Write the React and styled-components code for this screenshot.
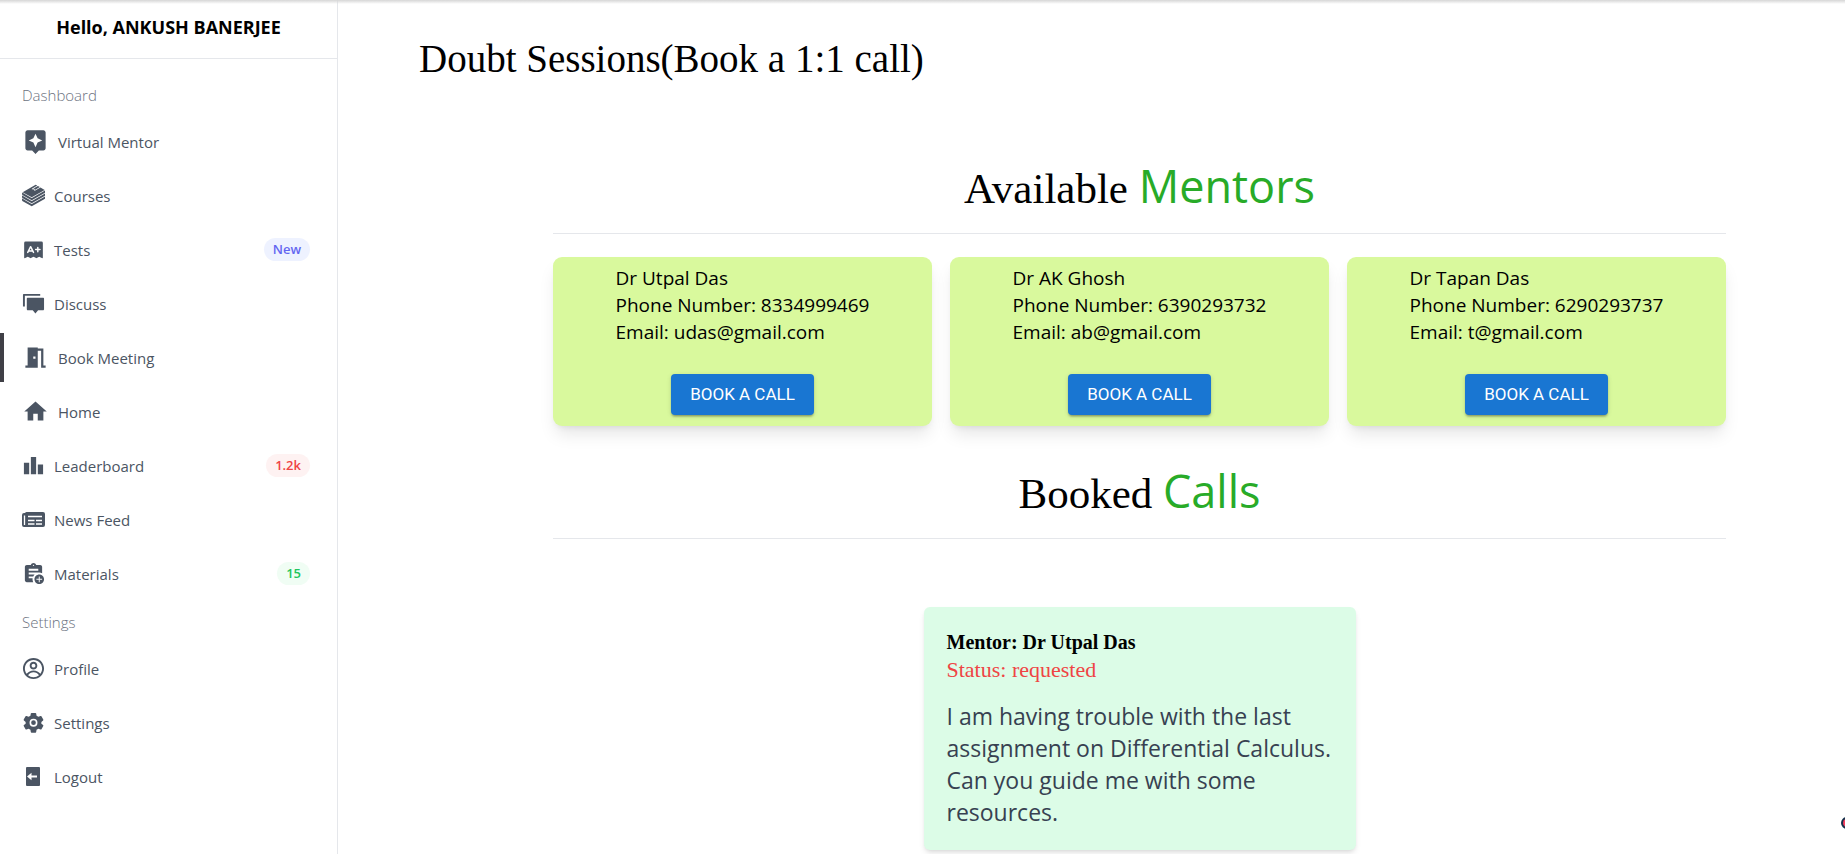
import React from "react";
import styled, { createGlobalStyle } from "styled-components";
import {
  MdAssistant,
  MdMeetingRoom,
  MdHome,
  MdLeaderboard,
  MdAssignmentAdd,
} from "react-icons/md";
import { RiDiscussFill } from "react-icons/ri";
import { CgProfile } from "react-icons/cg";
import { SiBookstack } from "react-icons/si";
import { PiExamFill } from "react-icons/pi";

const sans = '"Open Sans", "Noto Sans", sans-serif';
const serif = '"Liberation Serif", "Times New Roman", serif';
const round = '"Open Sans", "Noto Sans", sans-serif';

const GlobalStyle = createGlobalStyle`
  *, *::before, *::after { box-sizing: border-box; }
  body { margin: 0; background: #fff; color: #000; font-family: ${sans}; }
  h1, h2, h3, p, ul { margin: 0; padding: 0; font-weight: 400; }
  ul { list-style: none; }
`;

const Page = styled.div`
  display: flex;
  min-height: 100vh;
  overflow: hidden;
`;

const TopShadow = styled.div`
  position: absolute;
  inset: 0 0 auto 0;
  height: 4px;
  background: linear-gradient(#d6d6d6, rgba(255, 255, 255, 0));
  z-index: 2;
`;

const Sidebar = styled.aside`
  flex: 0 0 338px;
  border-right: 1px solid #e5e7eb;
`;

const Greeting = styled.div`
  height: 59px;
  padding-top: 14px;
  border-bottom: 1px solid #e5e7eb;
  text-align: center;
  font-size: 18px;
  line-height: 27px;
  font-weight: 700;
`;

const NavList = styled.ul`
  display: flex;
  flex-direction: column;
  gap: 5px;
  padding-top: 17px;
`;

const NavLabel = styled.li`
  height: 36px;
  padding-left: 22px;
  font-size: 15px;
  line-height: 38px;
  font-weight: 300;
  color: #6b7280;
`;

const NavLink = styled.a`
  display: flex;
  align-items: center;
  gap: 9px;
  height: 49px;
  padding: 0 27px 0 18px;
  border-left: 4px solid ${(p) => (p.$active ? "#3f3f46" : "transparent")};
  font-size: 15px;
  color: #4b5563;
  text-decoration: none;
`;

const Badge = styled.span`
  margin-left: auto;
  padding: 0 9px;
  border-radius: 12px;
  font-size: 13px;
  line-height: 23px;
  font-weight: 600;
  color: ${(p) => p.$color};
  background: ${(p) => p.$bg};
`;

const Main = styled.main`
  flex: 1;
  min-width: 0;
  padding-top: 37px;
`;

const PageTitle = styled.h1`
  padding-left: 81px;
  font: 400 39px/44px ${serif};
`;

const Section = styled.section`
  margin: 0 119px 0 215px;
`;

const SectionTitle = styled.h2`
  padding: ${(p) => p.$top}px 0 20px;
  border-bottom: 1px solid #e5e7eb;
  text-align: center;
  font: 400 43px/48px ${serif};
`;

const Accent = styled.span`
  color: #28ab28;
  font-family: ${round};
  font-size: 45px;
  line-height: 40px;
`;

const MentorGrid = styled.div`
  display: grid;
  grid-template-columns: repeat(3, 1fr);
  gap: 18px;
  padding-top: 23px;
`;

const MentorCard = styled.article`
  display: flex;
  flex-direction: column;
  align-items: center;
  gap: 28px;
  padding: 8px 8px 11px;
  border-radius: 9px;
  background: #d9f99d;
  box-shadow: 0 11px 17px -3px rgba(0, 0, 0, 0.1), 0 4px 7px -4px rgba(0, 0, 0, 0.1);
`;

const MentorInfo = styled.div`
  font: 400 19px/27px ${round};
`;

const CallButton = styled.button`
  height: 41px;
  padding: 0 19px;
  border: 0;
  border-radius: 4px;
  background: #1976d2;
  color: #fff;
  font: 400 17px/27px Roboto, sans-serif;
  box-shadow: 0 3px 2px -2px rgba(0, 0, 0, 0.2), 0 2px 2px rgba(0, 0, 0, 0.14), 0 1px 5px rgba(0, 0, 0, 0.12);
`;

const BookedCard = styled.article`
  width: 432px;
  margin: 68px auto 0;
  padding: 22px 23px;
  border-radius: 6px;
  background: #dcfce7;
  box-shadow: 0 4px 6px -1px rgba(0, 0, 0, 0.1), 0 2px 4px -2px rgba(0, 0, 0, 0.1);
`;

const BookedMentor = styled.h3`
  font: 700 20px/27px ${serif};
`;

const Status = styled.p`
  font: 400 22px/27px ${serif};
  color: #ef4444;
`;

const Message = styled.p`
  padding-top: 17px;
  font: 400 23px/32px ${round};
  color: #374151;
`;

const ChatMarker = styled.svg`
  position: absolute;
  right: 0;
  top: 817px;
`;

const NewsIcon = ({ size }) => (
  <svg width={size} height={size} viewBox="0 0 23 23" aria-hidden="true">
    <path
      d="M5 4h16a2 2 0 0 1 2 2v11a2 2 0 0 1-2 2H2a2 2 0 0 1-2-2V7a2 2 0 0 1 2-2h1a2 2 0 0 1 2-1z"
      fill="currentColor"
    />
    <path d="M2.500 7.500V17M6 8.500h14M6 12.500h6.500M14 12.500h6M6 16h6.500M14 16h6" stroke="#fff" strokeWidth="1.300" />
  </svg>
);

const GearIcon = ({ size }) => (
  <svg width={size} height={size} viewBox="0 0 24 24" aria-hidden="true">
    <path
      d="M10 2h4a.800.800 0 0 1 .800.700l.400 2.300 1.900 1.100 2.200-.800a.800.800 0 0 1 1 .300l1.900 3.300a.800.800 0 0 1-.200 1L20.200 11.400v1.800l1.800 1.500a.800.800 0 0 1 .200 1l-1.900 3.300a.800.800 0 0 1-1 .300l-2.200-.800-1.900 1.100-.400 2.300a.800.800 0 0 1-.800.700h-4a.800.800 0 0 1-.800-.700l-.400-2.300-1.900-1.100-2.200.800a.800.800 0 0 1-1-.300l-1.900-3.300a.800.800 0 0 1 .200-1l1.800-1.500v-1.800L2 9.900a.800.800 0 0 1-.200-1l1.900-3.300a.800.800 0 0 1 1-.300l2.200.800L8.800 5l.400-2.300A.800.800 0 0 1 10 2z"
      fill="currentColor"
    />
    <circle cx="12" cy="12.200" r="3.300" fill="none" stroke="#fff" strokeWidth="1.700" />
  </svg>
);

const LogoutIcon = ({ size }) => (
  <svg width={size} height={size} viewBox="0 0 23 23" aria-hidden="true">
    <rect x="4" y="2" width="14" height="19" rx="1" fill="currentColor" />
    <path d="M5 11.500l4.500-3.800v2.800H15v2H9.500v2.800z" fill="#fff" />
  </svg>
);

const dashboard = [
  { label: "Virtual Mentor", Icon: MdAssistant, size: 27 },
  { label: "Courses", Icon: SiBookstack },
  { label: "Tests", Icon: PiExamFill, badge: ["New", "#6366f1", "#eef2ff"] },
  { label: "Discuss", Icon: RiDiscussFill },
  { label: "Book Meeting", Icon: MdMeetingRoom, size: 27, active: true },
  { label: "Home", Icon: MdHome, size: 27 },
  { label: "Leaderboard", Icon: MdLeaderboard, badge: ["1.2k", "#ef4444", "#fef2f2"] },
  { label: "News Feed", Icon: NewsIcon },
  { label: "Materials", Icon: MdAssignmentAdd, badge: ["15", "#22c55e", "#f0fdf4"] },
];

const settings = [
  { label: "Profile", Icon: CgProfile },
  { label: "Settings", Icon: GearIcon },
  { label: "Logout", Icon: LogoutIcon },
];

const mentors = [
  { name: "Dr Utpal Das", phone: "8334999469", email: "udas@gmail.com" },
  { name: "Dr AK Ghosh", phone: "6390293732", email: "ab@gmail.com" },
  { name: "Dr Tapan Das", phone: "6290293737", email: "t@gmail.com" },
];

const NavItem = ({ label, Icon, size = 23, active, badge }) => (
  <li>
    <NavLink href="#" $active={active}>
      <Icon size={size} />
      <span>{label}</span>
      {badge && (
        <Badge $color={badge[1]} $bg={badge[2]}>
          {badge[0]}
        </Badge>
      )}
    </NavLink>
  </li>
);

export default function App() {
  return (
    <>
      <GlobalStyle />
      <TopShadow />
      <Page>
        <Sidebar>
          <Greeting>Hello, ANKUSH BANERJEE</Greeting>
          <nav>
            <NavList>
              <NavLabel>Dashboard</NavLabel>
              {dashboard.map((item) => (
                <NavItem key={item.label} {...item} />
              ))}
              <NavLabel>Settings</NavLabel>
              {settings.map((item) => (
                <NavItem key={item.label} {...item} />
              ))}
            </NavList>
          </nav>
        </Sidebar>
        <Main>
          <PageTitle>Doubt Sessions(Book a 1:1 call)</PageTitle>
          <Section>
            <SectionTitle $top={84}>
              Available <Accent>Mentors</Accent>
            </SectionTitle>
            <MentorGrid>
              {mentors.map((m) => (
                <MentorCard key={m.name}>
                  <MentorInfo>
                    <p>{m.name}</p>
                    <p>Phone Number: {m.phone}</p>
                    <p>Email: {m.email}</p>
                  </MentorInfo>
                  <CallButton type="button">BOOK A CALL</CallButton>
                </MentorCard>
              ))}
            </MentorGrid>
          </Section>
          <Section>
            <SectionTitle $top={44}>
              Booked <Accent>Calls</Accent>
            </SectionTitle>
            <BookedCard>
              <BookedMentor>Mentor: Dr Utpal Das</BookedMentor>
              <Status>Status: requested</Status>
              <Message>
                I am having trouble with the last assignment on Differential Calculus. Can you guide
                me with some resources.
              </Message>
            </BookedCard>
          </Section>
        </Main>
      </Page>
      <ChatMarker width="4" height="12" viewBox="0 0 4 12" aria-hidden="true">
        <circle cx="6" cy="6" r="6" fill="#12304a" />
        <circle cx="6" cy="6" r="4" fill="#f43f5e" />
      </ChatMarker>
    </>
  );
}
